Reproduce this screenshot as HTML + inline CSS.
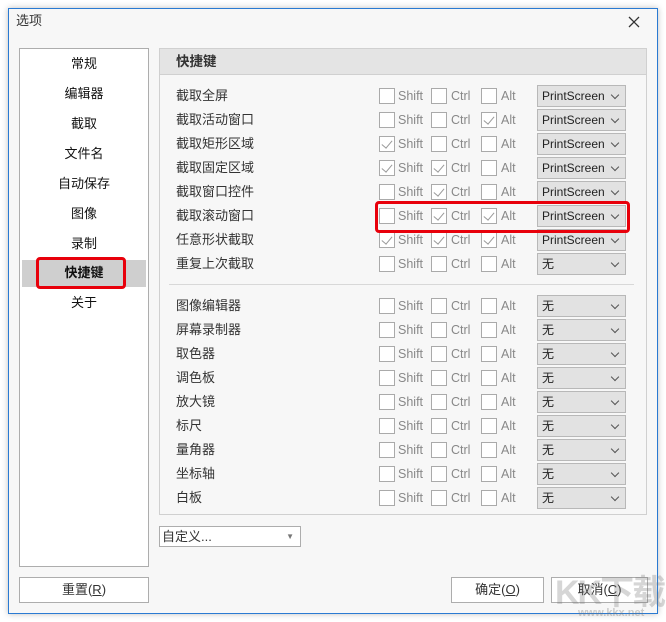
<!DOCTYPE html>
<html><head><meta charset="utf-8"><style>
*{margin:0;padding:0;box-sizing:border-box}
body{width:666px;height:622px;background:#fff;font-family:"Liberation Sans","Noto Sans CJK SC",sans-serif;font-size:13px;color:#222;position:relative;overflow:hidden}
.a{position:absolute}
.win{left:8px;top:8px;width:650px;height:606px;background:#f7f7f7;border:1px solid #2a7ad2;box-shadow:0 0 6px rgba(0,0,0,.25)}
.list{left:19px;top:48px;width:130px;height:519px;background:#fff;border:1px solid #adadad}
.li{position:absolute;left:0;width:128px;text-align:center;line-height:20px;color:#111}
.panel{left:159px;top:48px;width:488px;height:467px;border:1px solid #d0d0d0;background:#f7f7f7}
.hdr{left:0;top:0;width:486px;height:26px;background:#e4e4e4;border-bottom:1px solid #d0d0d0;font-weight:bold;padding-left:16px;line-height:26px;color:#333;font-size:13.5px}
.lb{position:absolute;left:176px;color:#333;line-height:18px}
.cb{position:absolute;width:16px;height:16px;border:1px solid #aaa;background:#fff}
.cb.c::after{content:"";position:absolute;left:4px;top:1px;width:5px;height:9px;border-right:1.3px solid #999;border-bottom:1.3px solid #999;transform:rotate(40deg)}
.t{position:absolute;color:#888;line-height:16px;font-size:12.5px}
.dd{position:absolute;left:537px;width:89px;height:22px;border:1px solid #b8b8b8;background:#e2e2e2;line-height:20px;padding-left:4px;color:#222;font-size:12px}
.dd::after{content:"";position:absolute;right:7px;top:6px;width:5px;height:5px;border-right:1px solid #555;border-bottom:1px solid #555;transform:rotate(45deg)}
.btn{position:absolute;height:26px;border:1px solid #adadad;background:#fff;text-align:center;line-height:24px;color:#333}
</style></head><body>
<div class="a win"></div>
<div class="a" style="left:16px;top:12px;color:#333;line-height:18px">选项</div>
<svg class="a" style="left:628px;top:16px" width="12" height="12"><path d="M1 1L11 11M11 1L1 11" stroke="#333" stroke-width="1.3"/></svg>
<div class="a list">
<div class="li" style="top:5px">常规</div>
<div class="li" style="top:35px">编辑器</div>
<div class="li" style="top:65px">截取</div>
<div class="li" style="top:95px">文件名</div>
<div class="li" style="top:125px">自动保存</div>
<div class="li" style="top:155px">图像</div>
<div class="li" style="top:185px">录制</div>
<div style="position:absolute;left:2px;top:211px;width:124px;height:27px;background:#cfcfcf"></div>
<div class="li" style="top:214px;font-weight:bold">快捷键</div>
<div class="li" style="top:244px">关于</div>
</div>
<div class="a" style="left:36px;top:257px;width:90px;height:32px;border:3px solid #e8000b;border-radius:4px"></div>
<div class="a panel"><div class="a hdr">快捷键</div></div>
<div class="a" style="left:169px;top:284px;width:465px;height:1px;background:#d8d8d8"></div>

<div class="lb" style="top:87px">截取全屏</div><div class="cb" style="left:379px;top:88px"></div><div class="t" style="left:398px;top:88px">Shift</div><div class="cb" style="left:431px;top:88px"></div><div class="t" style="left:451px;top:88px">Ctrl</div><div class="cb" style="left:481px;top:88px"></div><div class="t" style="left:501px;top:88px">Alt</div><div class="dd" style="top:85px">PrintScreen</div>
<div class="lb" style="top:111px">截取活动窗口</div><div class="cb" style="left:379px;top:112px"></div><div class="t" style="left:398px;top:112px">Shift</div><div class="cb" style="left:431px;top:112px"></div><div class="t" style="left:451px;top:112px">Ctrl</div><div class="cb c" style="left:481px;top:112px"></div><div class="t" style="left:501px;top:112px">Alt</div><div class="dd" style="top:109px">PrintScreen</div>
<div class="lb" style="top:135px">截取矩形区域</div><div class="cb c" style="left:379px;top:136px"></div><div class="t" style="left:398px;top:136px">Shift</div><div class="cb" style="left:431px;top:136px"></div><div class="t" style="left:451px;top:136px">Ctrl</div><div class="cb" style="left:481px;top:136px"></div><div class="t" style="left:501px;top:136px">Alt</div><div class="dd" style="top:133px">PrintScreen</div>
<div class="lb" style="top:159px">截取固定区域</div><div class="cb c" style="left:379px;top:160px"></div><div class="t" style="left:398px;top:160px">Shift</div><div class="cb c" style="left:431px;top:160px"></div><div class="t" style="left:451px;top:160px">Ctrl</div><div class="cb" style="left:481px;top:160px"></div><div class="t" style="left:501px;top:160px">Alt</div><div class="dd" style="top:157px">PrintScreen</div>
<div class="lb" style="top:183px">截取窗口控件</div><div class="cb" style="left:379px;top:184px"></div><div class="t" style="left:398px;top:184px">Shift</div><div class="cb c" style="left:431px;top:184px"></div><div class="t" style="left:451px;top:184px">Ctrl</div><div class="cb" style="left:481px;top:184px"></div><div class="t" style="left:501px;top:184px">Alt</div><div class="dd" style="top:181px">PrintScreen</div>
<div class="lb" style="top:207px">截取滚动窗口</div><div class="cb" style="left:379px;top:208px"></div><div class="t" style="left:398px;top:208px">Shift</div><div class="cb c" style="left:431px;top:208px"></div><div class="t" style="left:451px;top:208px">Ctrl</div><div class="cb c" style="left:481px;top:208px"></div><div class="t" style="left:501px;top:208px">Alt</div><div class="dd" style="top:205px">PrintScreen</div>
<div class="lb" style="top:231px">任意形状截取</div><div class="cb c" style="left:379px;top:232px"></div><div class="t" style="left:398px;top:232px">Shift</div><div class="cb c" style="left:431px;top:232px"></div><div class="t" style="left:451px;top:232px">Ctrl</div><div class="cb c" style="left:481px;top:232px"></div><div class="t" style="left:501px;top:232px">Alt</div><div class="dd" style="top:229px">PrintScreen</div>
<div class="lb" style="top:255px">重复上次截取</div><div class="cb" style="left:379px;top:256px"></div><div class="t" style="left:398px;top:256px">Shift</div><div class="cb" style="left:431px;top:256px"></div><div class="t" style="left:451px;top:256px">Ctrl</div><div class="cb" style="left:481px;top:256px"></div><div class="t" style="left:501px;top:256px">Alt</div><div class="dd" style="top:253px">无</div>

<div class="lb" style="top:297px">图像编辑器</div><div class="cb" style="left:379px;top:298px"></div><div class="t" style="left:398px;top:298px">Shift</div><div class="cb" style="left:431px;top:298px"></div><div class="t" style="left:451px;top:298px">Ctrl</div><div class="cb" style="left:481px;top:298px"></div><div class="t" style="left:501px;top:298px">Alt</div><div class="dd" style="top:295px">无</div>
<div class="lb" style="top:321px">屏幕录制器</div><div class="cb" style="left:379px;top:322px"></div><div class="t" style="left:398px;top:322px">Shift</div><div class="cb" style="left:431px;top:322px"></div><div class="t" style="left:451px;top:322px">Ctrl</div><div class="cb" style="left:481px;top:322px"></div><div class="t" style="left:501px;top:322px">Alt</div><div class="dd" style="top:319px">无</div>
<div class="lb" style="top:345px">取色器</div><div class="cb" style="left:379px;top:346px"></div><div class="t" style="left:398px;top:346px">Shift</div><div class="cb" style="left:431px;top:346px"></div><div class="t" style="left:451px;top:346px">Ctrl</div><div class="cb" style="left:481px;top:346px"></div><div class="t" style="left:501px;top:346px">Alt</div><div class="dd" style="top:343px">无</div>
<div class="lb" style="top:369px">调色板</div><div class="cb" style="left:379px;top:370px"></div><div class="t" style="left:398px;top:370px">Shift</div><div class="cb" style="left:431px;top:370px"></div><div class="t" style="left:451px;top:370px">Ctrl</div><div class="cb" style="left:481px;top:370px"></div><div class="t" style="left:501px;top:370px">Alt</div><div class="dd" style="top:367px">无</div>
<div class="lb" style="top:393px">放大镜</div><div class="cb" style="left:379px;top:394px"></div><div class="t" style="left:398px;top:394px">Shift</div><div class="cb" style="left:431px;top:394px"></div><div class="t" style="left:451px;top:394px">Ctrl</div><div class="cb" style="left:481px;top:394px"></div><div class="t" style="left:501px;top:394px">Alt</div><div class="dd" style="top:391px">无</div>
<div class="lb" style="top:417px">标尺</div><div class="cb" style="left:379px;top:418px"></div><div class="t" style="left:398px;top:418px">Shift</div><div class="cb" style="left:431px;top:418px"></div><div class="t" style="left:451px;top:418px">Ctrl</div><div class="cb" style="left:481px;top:418px"></div><div class="t" style="left:501px;top:418px">Alt</div><div class="dd" style="top:415px">无</div>
<div class="lb" style="top:441px">量角器</div><div class="cb" style="left:379px;top:442px"></div><div class="t" style="left:398px;top:442px">Shift</div><div class="cb" style="left:431px;top:442px"></div><div class="t" style="left:451px;top:442px">Ctrl</div><div class="cb" style="left:481px;top:442px"></div><div class="t" style="left:501px;top:442px">Alt</div><div class="dd" style="top:439px">无</div>
<div class="lb" style="top:465px">坐标轴</div><div class="cb" style="left:379px;top:466px"></div><div class="t" style="left:398px;top:466px">Shift</div><div class="cb" style="left:431px;top:466px"></div><div class="t" style="left:451px;top:466px">Ctrl</div><div class="cb" style="left:481px;top:466px"></div><div class="t" style="left:501px;top:466px">Alt</div><div class="dd" style="top:463px">无</div>
<div class="lb" style="top:489px">白板</div><div class="cb" style="left:379px;top:490px"></div><div class="t" style="left:398px;top:490px">Shift</div><div class="cb" style="left:431px;top:490px"></div><div class="t" style="left:451px;top:490px">Ctrl</div><div class="cb" style="left:481px;top:490px"></div><div class="t" style="left:501px;top:490px">Alt</div><div class="dd" style="top:487px">无</div>

<div class="a" style="left:375px;top:201px;width:255px;height:32px;border:3px solid #e8000b;border-radius:4px"></div>

<div class="a" style="left:159px;top:526px;width:142px;height:21px;border:1px solid #adadad;background:#fff;line-height:19px;padding-left:2px;color:#333">自定义...<span style="position:absolute;right:6px;top:0;font-size:8px;color:#777">▼</span></div>

<div class="btn" style="left:19px;top:577px;width:130px">重置(<u>R</u>)</div>
<div class="btn" style="left:451px;top:577px;width:93px">确定(<u>O</u>)</div>
<div class="btn" style="left:551px;top:577px;width:97px">取消(<u>C</u>)</div>
<div class="a" style="left:555px;top:565px;font-size:34px;font-weight:bold;color:rgba(120,120,120,.3);letter-spacing:-2px">KK下载</div>
<div class="a" style="left:578px;top:607px;font-size:11px;font-weight:bold;color:rgba(120,120,120,.35)">www.kkx.net</div>
</body></html>
